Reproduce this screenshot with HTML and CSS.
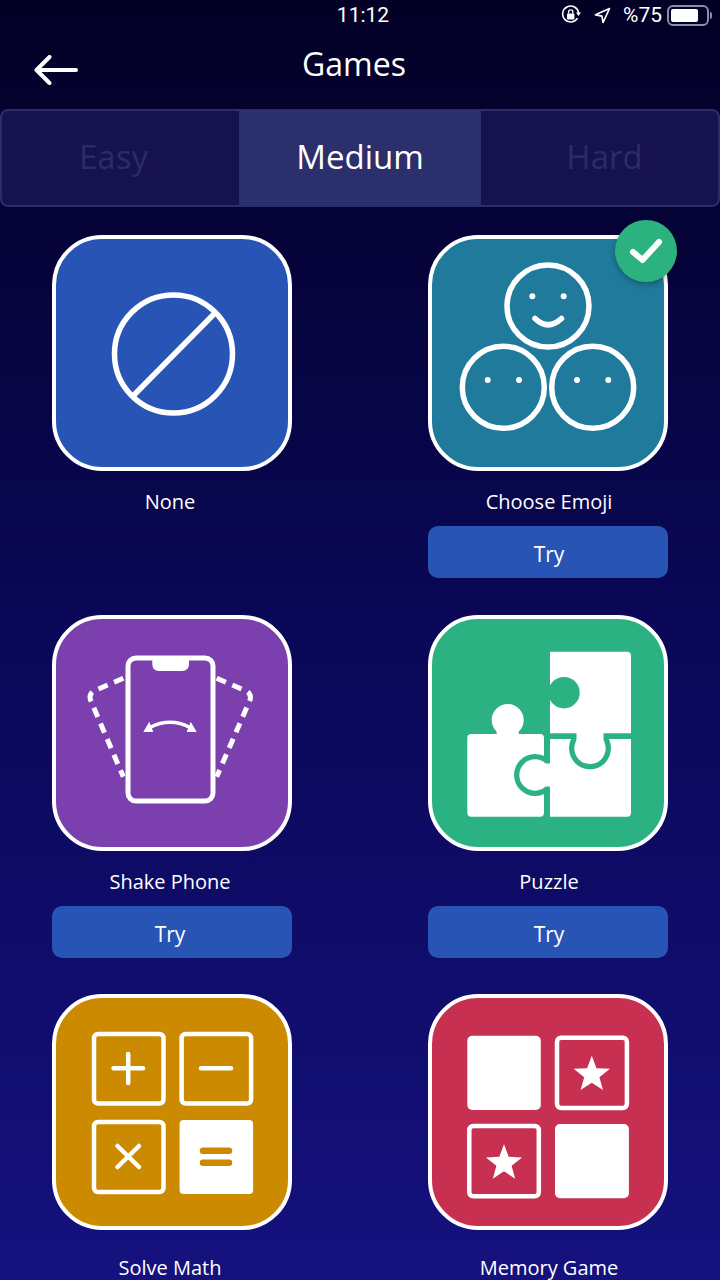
FILE: index.html
```html
<!DOCTYPE html>
<html lang="en">
<head>
    <meta charset="UTF-8">
    <meta name="viewport" content="width=device-width, initial-scale=1.0">
    <title>Games</title>
    <link rel="stylesheet" href="styles.css">
</head>
<body>

    <div class="status-bar">
        <span></span>
        <span class="status-time">11:12</span>
        <div class="status-right">
            <svg class="status-lock" width="20" height="20" viewBox="0 0 20 20">
                <path d="M16.5 13.2A8 8 0 1 1 17.6 8" fill="none" stroke="#fff" stroke-width="1.6"/>
                <path d="M15 7.5h5l-2.5 3.4z" fill="#fff"/>
                <rect x="6" y="8.5" width="7.4" height="6" rx="1" fill="#fff"/>
                <path d="M7.6 8.5V7a2.1 2.1 0 0 1 4.2 0v1.5" fill="none" stroke="#fff" stroke-width="1.4"/>
            </svg>
            <svg class="status-arrow" width="17" height="17" viewBox="0 0 17 17">
                <path d="M15.5 1.5L1.5 7.8l6.4 1.4 1.2 6.3z" fill="none" stroke="#fff" stroke-width="1.7" stroke-linejoin="round"/>
            </svg>
            <span class="status-pct">%75</span>
            <div class="battery"><div class="battery-fill"></div></div>
            <div class="battery-nub"></div>
        </div>
    </div>

    <div class="header">
        <svg class="back-arrow" width="44" height="30" viewBox="0 0 44 30">
            <path d="M42 15H3M15.5 2L2.500 15l13 13" fill="none" stroke="#fff" stroke-width="4" stroke-linecap="round" stroke-linejoin="round"/>
        </svg>
        <h1 class="title">Games</h1>
        <span></span>
    </div>

    <div class="tabs">
        <div class="tab tab-easy">Easy</div>
        <div class="tab tab-active">Medium</div>
        <div class="tab tab-hard">Hard</div>
    </div>

    <div class="games">

        <div class="game">
            <div class="tile tile-none">
                <svg viewBox="4 4 232 228" fill="none" stroke="#fff" stroke-width="5.500">
                    <circle cx="121.500" cy="119" r="59"/>
                    <path d="M82 160L162 79"/>
                </svg>
            </div>
            <div class="game-name">None</div>
        </div>

        <div class="game">
            <div class="tile tile-emoji">
                <svg viewBox="4 4 232 228" fill="none" stroke="#fff" stroke-width="5.500">
                    <circle cx="120" cy="71" r="41"/>
                    <circle cx="75.300" cy="152.300" r="41"/>
                    <circle cx="164.700" cy="152.300" r="41"/>
                    <path d="M107 83.500Q120 96 133.500 83.500" stroke-linecap="round"/>
                    <g fill="#fff" stroke="none">
                        <circle cx="104.300" cy="61.300" r="3"/>
                        <circle cx="135.700" cy="61.300" r="3"/>
                        <circle cx="59.700" cy="145" r="3"/>
                        <circle cx="91" cy="145" r="3"/>
                        <circle cx="149" cy="145" r="3"/>
                        <circle cx="180.300" cy="145" r="3"/>
                    </g>
                </svg>
                <div class="check-badge">
                    <svg width="36" height="30" viewBox="0 0 36 30">
                        <path d="M5 16l9.500 8L31 6" fill="none" stroke="#fff" stroke-width="6" stroke-linecap="round" stroke-linejoin="round"/>
                    </svg>
                </div>
            </div>
            <div class="game-name">Choose Emoji</div>
            <button class="try-btn">Try</button>
        </div>

        <div class="game">
            <div class="tile tile-shake">
                <svg viewBox="4 4 232 228" fill="none" stroke="#fff" stroke-width="5">
                    <path d="M71.300 63.300L43 75.500Q36.500 78.500 38.500 85L71.300 161.700" stroke-dasharray="10 7"/>
                    <path d="M164.700 63.300L193 75.500Q200 78.500 198 85L164.700 161.700" stroke-dasharray="10 7"/>
                    <rect x="76" y="43" width="85" height="143" rx="8"/>
                    <path d="M100.300 43H137V49Q137 56 130 56H107Q100.300 56 100.300 49Z" fill="#fff" stroke="none"/>
                    <path d="M98 112.500Q118 102 138 112.500" stroke-width="3.500"/>
                    <path d="M91.300 117H101.300L97.300 106.700ZM144.700 117H134.700L138.700 106.700Z" fill="#fff" stroke="none"/>
                </svg>
            </div>
            <div class="game-name">Shake Phone</div>
            <button class="try-btn">Try</button>
        </div>

        <div class="game">
            <div class="tile tile-puzzle">
                <svg viewBox="4 4 232 228">
                    <!-- bottom left piece -->
                    <rect x="39.300" y="119" width="76.700" height="82.700" rx="4" fill="#fff"/>
                    <circle cx="79.700" cy="105" r="16" fill="#fff"/>
                    <rect x="68.700" y="112" width="22" height="8" fill="#fff"/>
                    <circle cx="107" cy="160" r="21" fill="#2cb282"/>
                    <!-- bottom right piece -->
                    <path d="M122 124H203V197.700Q203 201.700 199 201.700H122Z" fill="#fff"/>
                    <circle cx="107" cy="160" r="15.700" fill="#fff"/>
                    <rect x="107" y="148.500" width="16" height="23" fill="#fff"/>
                    <circle cx="162" cy="133.300" r="21" fill="#2cb282"/>
                    <!-- top right piece -->
                    <path d="M122 36.700H199Q203 36.700 203 40.700V118.300H122Z" fill="#fff"/>
                    <circle cx="162" cy="133.300" r="15.700" fill="#fff"/>
                    <rect x="148.500" y="116" width="27" height="10" fill="#fff"/>
                    <circle cx="136" cy="77.700" r="15.700" fill="#2cb282"/>
                </svg>
            </div>
            <div class="game-name">Puzzle</div>
            <button class="try-btn">Try</button>
        </div>

        <div class="game game-last">
            <div class="tile tile-math">
                <svg viewBox="4 4 232 228" fill="none" stroke="#fff" stroke-width="4.500">
                    <rect x="42" y="40" width="69.500" height="69.500" rx="4"/>
                    <rect x="129.600" y="40" width="69.500" height="69.500" rx="4"/>
                    <rect x="42" y="128" width="69.500" height="70" rx="4"/>
                    <rect x="127.600" y="126" width="73.500" height="74" rx="4" fill="#fff" stroke="none"/>
                    <path d="M61.500 74.300H91M76.200 60V89M149 74.300H179" stroke-linecap="round"/>
                    <path d="M65.500 152L87 173M87 152L65.500 173" stroke-linecap="round"/>
                    <path d="M151 156.700H177M151 168.700H177" stroke="#cc8a00" stroke-width="6.500" stroke-linecap="round"/>
                </svg>
            </div>
            <div class="game-name">Solve Math</div>
        </div>

        <div class="game game-last">
            <div class="tile tile-memory">
                <svg viewBox="4 4 232 228" fill="none" stroke="#fff" stroke-width="4.500">
                    <rect x="39.300" y="41.700" width="73.500" height="74.300" rx="5" fill="#fff" stroke="none"/>
                    <rect x="129" y="43.700" width="69.900" height="70.300" rx="4"/>
                    <rect x="41.300" y="132" width="69.500" height="70.300" rx="4"/>
                    <rect x="127" y="130" width="73.900" height="74.300" rx="5" fill="#fff" stroke="none"/>
                    <g fill="#fff" stroke="none">
                        <polygon transform="translate(163.800 80.700)" points="0,-19 4.700,-6.500 18.100,-5.900 7.600,2.500 11.200,15.400 0,8 -11.200,15.400 -7.600,2.500 -18.100,-5.900 -4.700,-6.500"/>
                        <polygon transform="translate(76 169.300)" points="0,-19 4.700,-6.500 18.100,-5.900 7.600,2.500 11.200,15.400 0,8 -11.200,15.400 -7.600,2.500 -18.100,-5.900 -4.700,-6.500"/>
                    </g>
                </svg>
            </div>
            <div class="game-name">Memory Game</div>
        </div>

    </div>

</body>
</html>
```

FILE: styles.css
```css
body {
    margin: 0;
    height: 1280px;
    overflow: hidden;
    font-family: "Open Sans", Lato, sans-serif;
    color: white;
    background: linear-gradient(#030026 0%, #0a0858 50%, #15117e 100%);
}

.status-bar {
    height: 30px;
    display: grid;
    grid-template-columns: 1fr auto 1fr;
    align-items: center;
    padding: 0 8px 0 14px;
    font-family: Roboto, sans-serif;
}

.status-time {
    font-size: 21px;
}

.status-right {
    display: flex;
    align-items: center;
    justify-content: flex-end;
    font-size: 21px;
}

.status-lock {
    margin-right: 13px;
}

.status-arrow {
    margin-right: 12px;
}

.status-pct {
    margin-right: 5px;
}

.battery {
    width: 42px;
    height: 21px;
    box-sizing: border-box;
    border: 2px solid #8d8da6;
    border-radius: 6px;
    padding: 2px;
}

.battery-fill {
    width: 27px;
    height: 100%;
    background: white;
    border-radius: 2px;
}

.battery-nub {
    width: 2px;
    height: 7px;
    margin-left: 1px;
    background: #8d8da6;
    border-radius: 0 2px 2px 0;
}

.header {
    height: 79px;
    display: grid;
    grid-template-columns: 1fr auto 1fr;
    align-items: center;
    padding: 0 46px 0 34px;
    box-sizing: border-box;
}

.back-arrow {
    display: block;
}

.title {
    margin: 0 0 11px;
    font-size: 32px;
    font-weight: 500;
    line-height: 44px;
}

.tabs {
    height: 98px;
    box-sizing: border-box;
    display: grid;
    grid-template-columns: 237px 242px 1fr;
    background: #15124f;
    border: 2px solid #282d6b;
    border-radius: 8px;
    overflow: hidden;
}

.tab {
    display: flex;
    align-items: center;
    justify-content: center;
    padding-bottom: 4px;
    font-size: 33px;
    color: #2a2c68;
}

.tab-easy {
    padding-right: 14px;
}

.tab-hard {
    padding-left: 10px;
}

.tab-active {
    background: #2b2f6c;
    color: white;
}

.games {
    display: grid;
    grid-template-columns: 240px 240px;
    grid-template-rows: 380px 379px auto;
    justify-content: space-between;
    padding: 28px 52px 0;
}

.game {
    display: flex;
    flex-direction: column;
}

.tile {
    position: relative;
    width: 240px;
    height: 236px;
    box-sizing: border-box;
    border: 4px solid white;
    border-radius: 50px;
}

.tile svg {
    display: block;
}

.tile-none { background: #2855b5; }
.tile-emoji { background: #1f7a9c; }
.tile-shake { background: #7b3fae; }
.tile-puzzle { background: #2cb282; }
.tile-math { background: #cc8a00; }
.tile-memory { background: #c73051; }

.check-badge {
    position: absolute;
    top: -19px;
    right: -13px;
    width: 62px;
    height: 62px;
    border-radius: 50%;
    background: #2bb27f;
    box-shadow: 0 2px 6px rgba(0, 0, 0, 0.3);
    display: flex;
    align-items: center;
    justify-content: center;
}

.game-name {
    margin-top: 18px;
    height: 26px;
    line-height: 26px;
    font-size: 20px;
    text-align: center;
}

.game:nth-child(odd) .game-name {
    padding-right: 4px;
}

.game:nth-child(even) .game-name {
    padding-left: 2px;
}

.game-last .game-name {
    margin-top: 26px;
    height: 24px;
    line-height: 24px;
}

.try-btn {
    margin-top: 11px;
    height: 52px;
    padding: 4px 0 0;
    border: none;
    border-radius: 10px;
    background: #2855b5;
    color: white;
    font-family: inherit;
    font-size: 21px;
}

.game:nth-child(odd) .try-btn {
    padding-right: 4px;
}

.game:nth-child(even) .try-btn {
    padding-left: 2px;
}
```
